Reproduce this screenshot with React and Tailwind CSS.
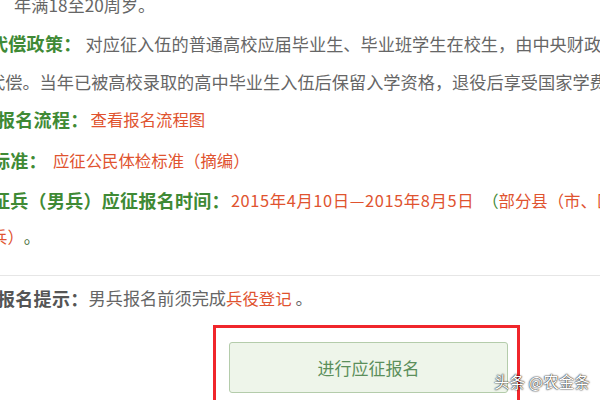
const font = { fontFamily: '"Noto Sans CJK SC", "Noto Sans", sans-serif' };

const Label = ({ children, className = '' }) => (
  <span className={`text-[18px] font-bold tracking-[0.3px] text-[#3f8a35] ${className}`}>{children}</span>
);

const Body = ({ children }) => <span className="text-[17.2px] text-[#666]">{children}</span>;

const Link = ({ children, className = '' }) => (
  <span className={`text-[16.4px] text-[#e0532f] ${className}`}>{children}</span>
);

export default function App() {
  return (
    <div
      className="relative w-[600px] h-[400px] overflow-hidden bg-white whitespace-nowrap"
      style={font}
    >
      <div className="flex flex-col mt-[-14px]">
        {/* 年龄 */}
        <div className="flex items-center h-[38px] pl-[14px]">
          <Body>年满18至20周岁。</Body>
        </div>

        {/* 代偿政策 */}
        <div className="flex items-center h-[39px] ml-[-10px]">
          <Label>代偿政策：</Label>
          <span className="ml-[4px]">
            <Body>对应征入伍的普通高校应届毕业生、毕业班学生在校生，由中央财政代偿学费和国家助学贷款</Body>
          </span>
        </div>
        <div className="flex items-center h-[37px] ml-[-12px]">
          <Body>代偿。当年已被高校录取的高中毕业生入伍后保留入学资格，退役后享受国家学费资助。</Body>
        </div>

        {/* 报名流程 */}
        <div className="flex items-center h-[39px] ml-[-3px]">
          <Label>报名流程：</Label>
          <Link className="ml-[2px]">查看报名流程图</Link>
        </div>

        {/* 体检标准 */}
        <div className="flex items-center h-[42px] ml-[-8px]">
          <Label>标准：</Label>
          <Link className="ml-[6px]">应征公民体检标准（摘编）</Link>
        </div>

        {/* 报名时间 */}
        <div className="flex items-center h-[38px] ml-[-8px]">
          <Label>征兵（男兵）应征报名时间：</Label>
          <Link className="ml-[1px] tracking-[0.6px]">2015年4月10日—2015年8月5日</Link>
          <span className="ml-[8px] text-[16.4px] text-[#3f8a35]">（</span>
          <Link>部分县（市、区）</Link>
        </div>
        <div className="flex items-center h-[34px] ml-[-9px]">
          <Link>兵）</Link>
          <span className="text-[16.4px] text-[#3f6b35]">。</span>
        </div>

        <div className="mt-[22px] border-t border-[#e6e6e6]" />

        {/* 报名提示 */}
        <div className="flex items-center h-[44px] ml-[-3px]">
          <span className="text-[18px] font-bold tracking-[0.3px] text-[#555]">报名提示：</span>
          <Body>男兵报名前须完成</Body>
          <Link>兵役登记</Link>
          <Body>&nbsp;。</Body>
        </div>

        {/* 进行应征报名 */}
        <div className="flex pl-[213px] mt-[5px]">
          <div className="w-[307px] h-[100px] border-[3px] border-[#f0262b] pt-[14px] pl-[13px]">
            <button className="w-[279px] h-[51px] rounded-[3px] border border-[#b4ccab] bg-[#eef5ea] text-[17px] text-[#5b8f5b] flex items-center justify-center">
              进行应征报名
            </button>
          </div>
        </div>
      </div>

      <div className="absolute left-[494px] top-[370px] text-[15.5px] text-white [text-shadow:0_0_2px_rgba(0,0,0,0.9),0_0_1px_rgba(0,0,0,0.9)]">
        头条 @农金条
      </div>
    </div>
  );
}
